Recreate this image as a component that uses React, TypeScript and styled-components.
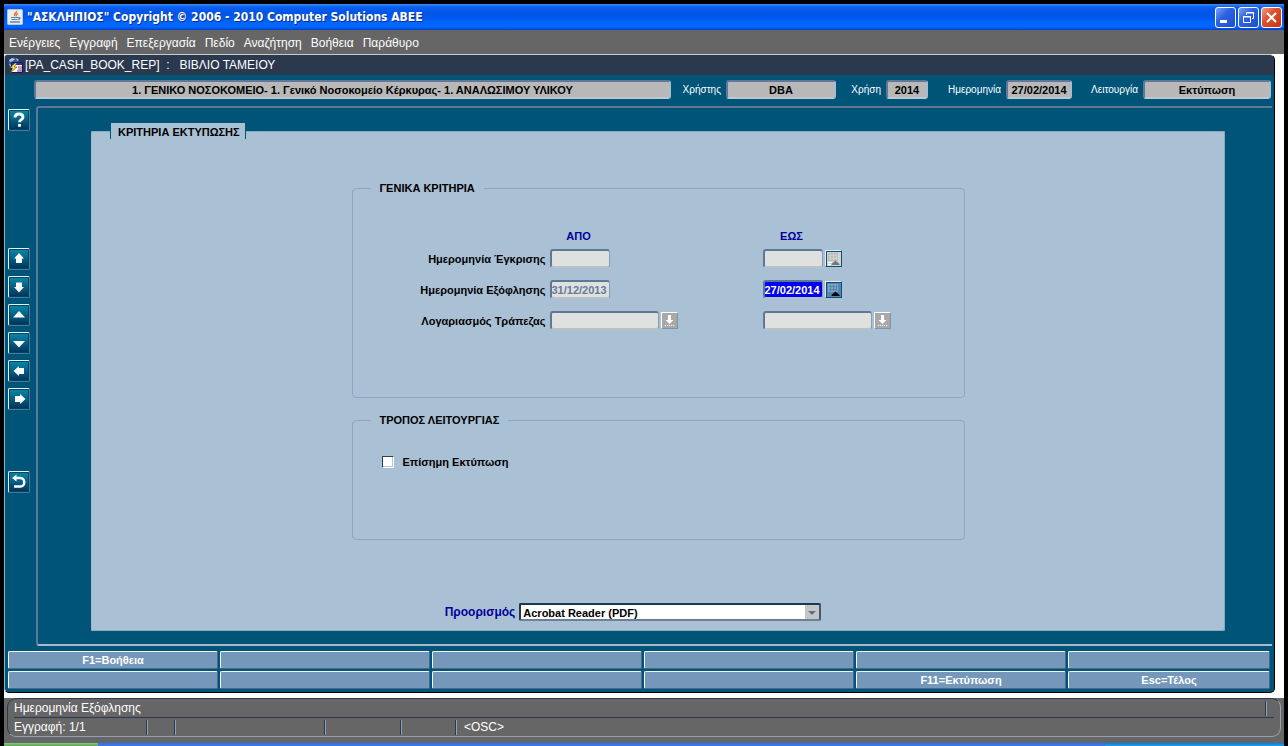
import React from "react";
import styled, { createGlobalStyle } from "styled-components";

const teal = "#005478";
const slate = "#5f7799";
const panelBlue = "#aac0d5";
const edge = "#8ea6c0";

const GlobalStyle = createGlobalStyle`
  * { box-sizing: border-box; }
  body {
    margin: 0;
    background: #000;
    color: #000;
    font-family: "Liberation Sans", Arial, sans-serif;
    font-size: 11px;
    line-height: 14px;
  }
  button, input, select { font: inherit; color: inherit; margin: 0; padding: 0; border-radius: 0; }
`;

const Desktop = styled.div`
  padding: 4px 4px 0;
`;

const TitleBar = styled.header`
  display: flex;
  align-items: center;
  height: 26px;
  padding: 0 2px 0 3px;
  background: linear-gradient(#3d8cf8 0, #0a5ff0 3px, #0055e5 9px, #0058ee 14px, #0066ff 19px, #0066ff 23px, #0040c8 26px);
`;

const WindowTitle = styled.h1`
  flex: 1;
  margin: 0 0 0 4px;
  color: #fff;
  font: bold 12px/18px "DejaVu Sans Condensed", "DejaVu Sans", sans-serif;
  text-shadow: 1px 1px #0b2f8c;
`;

const WindowButtons = styled.div`
  display: flex;
  gap: 2px;
`;

const WindowButton = styled.button<{ $danger?: boolean }>`
  width: 21px;
  height: 21px;
  border: 1px solid #fff;
  border-radius: 3px;
  background: ${(p) =>
    p.$danger
      ? "linear-gradient(135deg, #f0a08a, #e2502c 40%, #c8340e)"
      : "linear-gradient(135deg, #7da2f5, #2f62e0 40%, #1c4fd0)"};
  svg { display: block; }
`;

const MenuBar = styled.nav`
  display: flex;
  gap: 9px;
  height: 24px;
  padding: 6px 5px 0;
  background: #666;
  font-size: 12px;
`;

const MenuItem = styled.a`
  color: #fff;
  text-decoration: none;
`;

const Workspace = styled.main`
  padding: 0 9px 5px 0;
  background: #fff;
`;

const FormWindow = styled.section`
  border: 1px solid;
  border-color: #c4ccd4 #000 #000 #8fb4c8;
  border-radius: 4px 6px 5px 5px;
  background: ${teal};
  overflow: hidden;
`;

const FormTitle = styled.h2`
  display: flex;
  align-items: center;
  gap: 1px;
  height: 20px;
  margin: 0;
  padding-left: 2px;
  background: #2b394e;
  color: #fff;
  font-size: 12px;
  font-weight: normal;
  white-space: pre;
`;

const InfoBar = styled.div`
  display: flex;
  align-items: center;
  padding: 5px 3px 0 29px;
`;

const InfoLabel = styled.label<{ $width: number }>`
  width: ${(p) => p.$width}px;
  padding-right: 5px;
  color: #fff;
  font-size: 10px;
  text-align: right;
`;

const InfoField = styled.input<{ $width?: number }>`
  ${(p) => (p.$width ? `width: ${p.$width}px;` : "flex: 1; min-width: 0;")}
  height: 19px;
  border: 2px solid;
  border-color: ${slate} #a9bccb #b9c8d4 ${slate};
  border-radius: 3px;
  background: #b8b8b8;
  font-weight: bold;
  text-align: center;
  outline: 0;
`;

const Body = styled.div`
  display: flex;
  padding: 7px 2px 0 3px;
`;

const Toolbar = styled.div`
  display: flex;
  flex-direction: column;
  gap: 6px;
  width: 28px;
  padding-top: 3px;
`;

const ToolButton = styled.button<{ $before?: number }>`
  width: 22px;
  height: 22px;
  margin-top: ${(p) => p.$before ?? 0}px;
  border: 1px solid;
  border-color: #e6f2f6 #4a7a9c #4a7a9c #e6f2f6;
  border-radius: 2px;
  background: linear-gradient(#0889a8, #045f84 50%, #022f55);
  box-shadow: inset 0 0 0 1px #004466;
  svg { display: block; }
`;

const Frame = styled.div`
  flex: 1;
  border: solid;
  border-width: 2px 0 2px 2px;
  border-color: ${slate} transparent #a9b8cc ${slate};
  border-radius: 3px 0 0 3px;
  padding: 23px 47px 13px 53px;
`;

const Panel = styled.section`
  position: relative;
  display: flex;
  flex-direction: column;
  align-items: center;
  padding: 50px 20px 10px;
  border-radius: 2px;
  background: ${panelBlue};
  box-shadow: inset 0 1px #88a9c2, inset 1px 0 #9db9cf, inset -1px -1px #88a9c2;
`;

const PanelTab = styled.h3`
  position: absolute;
  top: -8px;
  left: 19px;
  margin: 0;
  padding: 2px 5px 0 7px;
  border: solid ${teal};
  border-width: 0 1px;
  height: 16px;
  background: ${panelBlue};
  font-size: 11px;
  line-height: 15px;
`;

const Group = styled.fieldset<{ $height: number }>`
  width: 613px;
  max-width: 100%;
  min-height: ${(p) => p.$height}px;
  margin: 0 0 15px;
  padding: 0;
  border: 1px solid ${edge};
  border-radius: 4px;
`;

const Legend = styled.legend`
  margin-left: 18px;
  padding: 0 9px;
  font-weight: bold;
  line-height: 15px;
`;

const Criteria = styled.div`
  display: grid;
  grid-template-columns: 193px 209px auto;
  grid-auto-rows: 31px;
  column-gap: 4px;
  align-items: center;
  padding-top: 16px;
  font-weight: bold;
`;

const ColumnHead = styled.span`
  width: 58px;
  padding-top: 16px;
  color: #00009c;
  text-align: center;
`;

const RowLabel = styled.label`
  text-align: right;
  white-space: nowrap;
`;

const FieldCell = styled.div`
  display: flex;
  align-items: center;
  gap: 2px;
`;

const Field = styled.input<{ $wide?: boolean; $selected?: boolean }>`
  width: ${(p) => (p.$wide ? 109 : 60)}px;
  height: 19px;
  border: solid;
  border-width: 2px 1px 2px 2px;
  border-color: ${slate} #8b9cb0 #b9c0c8 ${slate};
  border-radius: 3px;
  background: ${(p) => (p.$selected ? "#0000f0" : "#dfe1df")};
  color: ${(p) => (p.$selected ? "#fff" : "#667a9c")};
  outline: 0;
`;

const PickButton = styled.button<{ $tone: "list" | "dim" | "active" }>`
  width: 17px;
  height: 17px;
  border: 1px solid;
  border-color: ${(p) => (p.$tone === "list" ? "#fff #7c93ad #7c93ad #fff" : "#e4ecf2 #0d4f72 #0d4f72 #e4ecf2")};
  background: ${(p) => ({ list: "#a9a9a9", dim: "#d4d6d6", active: "#5487b0" })[p.$tone]};
  svg { display: block; }
`;

const CheckRow = styled.label`
  display: flex;
  align-items: center;
  gap: 9px;
  margin: 27px 0 0 29px;
  font-weight: bold;
`;

const CheckBox = styled.input`
  appearance: none;
  width: 12px;
  height: 12px;
  border: 1px solid;
  border-color: #2c3f54 #fff #fff #2c3f54;
  background: #fff;
  box-shadow: inset -1px -1px #b4c4d0;
`;

const TargetRow = styled.div`
  display: flex;
  align-items: center;
  gap: 4px;
  margin: 48px 50px 0 0;
  font-weight: bold;
`;

const TargetLabel = styled.label`
  color: #00009c;
  font-size: 12px;
`;

const SelectShell = styled.div`
  display: grid;
  width: 302px;
  svg {
    grid-area: 1 / 1;
    justify-self: end;
    align-self: center;
    margin-right: 2px;
    pointer-events: none;
  }
`;

const Select = styled.select`
  grid-area: 1 / 1;
  appearance: none;
  height: 18px;
  padding: 1px 18px 0 2px;
  border: 2px solid;
  border-color: #1f3650 #44586f #6f8094 #1f3650;
  border-radius: 2px;
  background: #fff;
  line-height: 14px;
`;

const KeyGrid = styled.div`
  display: grid;
  grid-template-columns: repeat(5, 210fr) 202fr;
  gap: 2px;
  padding: 5px 4px 3px 3px;
`;

const KeyButton = styled.button`
  height: 18px;
  border: 1px solid;
  border-color: #f2f8fa #47698c #47698c #f2f8fa;
  border-radius: 2px;
  background: #7598ba;
  color: #fff;
  font-weight: bold;
`;

const StatusBar = styled.footer`
  padding: 0 3px 6px;
  background: #666;
  color: #fff;
  font-size: 12px;
`;

const StatusBox = styled.div`
  border: 1px solid;
  border-color: #2b394e #94a0b4 #94a0b4 #2b394e;
  border-radius: 9px;
  padding: 0 6px;
`;

const StatusRow = styled.div<{ $divided?: boolean }>`
  display: flex;
  align-items: center;
  height: ${(p) => (p.$divided ? 19 : 18)}px;
  ${(p) => (p.$divided ? "border-bottom: 1px solid #2b394e;" : "")}
`;

const StatusCell = styled.span<{ $width?: number; $grow?: boolean; $last?: boolean }>`
  ${(p) => (p.$grow ? "flex: 1;" : p.$width ? `width: ${p.$width}px;` : "")}
  height: 15px;
  line-height: 15px;
  padding-left: ${(p) => (p.$last ? 7 : 0)}px;
  ${(p) => (p.$last ? "" : "border-right: 1px solid #94a0b4; box-shadow: inset -1px 0 #2b394e;")}
`;

const TaskBar = styled.div`
  display: grid;
  grid-template-columns: 94px 1fr 179px;
  height: 4px;
`;

const TaskStrip = styled.div<{ $from: string; $to: string }>`
  background: linear-gradient(${(p) => p.$from}, ${(p) => p.$to});
`;

const CupIcon = () => (
  <svg width="16" height="16" viewBox="0 0 16 16" aria-hidden="true">
    <rect x="0.5" y="0.5" width="15" height="15" rx="1" fill="#e9edf0" stroke="#b8c6d4" />
    <path d="M9.500 2c1 1.500-3.500 2.500-2 5M11 4.500c-1.500 1-2.500 1.500-1.500 3" fill="none" stroke="#e07820" strokeWidth="1.500" />
    <path d="M4 8.500h7M4.500 10.500h6M11 8.500h1.500c1 0 .5 2-1.500 2" fill="none" stroke="#5a80a4" strokeWidth="1.200" />
    <path d="M3 13h10" stroke="#5a80a4" strokeWidth="1.400" />
  </svg>
);

const FormIcon = () => (
  <svg width="17" height="17" viewBox="0 0 17 17" aria-hidden="true">
    <circle cx="7" cy="6" r="5.500" fill="#2f5c96" />
    <path d="M2 3l3-2 3 1-2 2-3 1zM2 7l3 1-1 2zM9 1l3 2-2 1z" fill="#a9c8dc" />
    <path d="M4.500 5.500h11v10h-11z" fill="#fff" stroke="#1a1468" />
    <path d="M5 6h10v2H5z" fill="#3030a8" />
    <path d="M11 10h4M11 12h4" stroke="#c02838" />
    <path d="M10 14h5" stroke="#3030a8" />
    <path d="M8 6l-5 5h3l-3 5 7-6H7l3-4z" fill="#ffe94a" stroke="#504800" strokeWidth="0.600" />
  </svg>
);

const glyphs = {
  help: <path d="M6 7.500c0-2.500 1.500-3.500 4-3.500s4 1 4 3.200c0 2.600-3.500 2.300-3.500 5M10.500 14v2.800" fill="none" stroke="#fff" strokeWidth="2.800" />,
  up: <path d="M10 4l5 5.500h-2V14H7V9.500H5z" fill="#fff" />,
  down: <path d="M10 15.500L15 10h-2V5.500H7V10H5z" fill="#fff" />,
  first: <path d="M10 6l6 6.500H4z" fill="#fff" />,
  last: <path d="M10 14.500L16 8H4z" fill="#fff" />,
  left: <path d="M4.500 10L10 5v2h5v6h-5v2z" fill="#fff" />,
  right: <path d="M16.500 10L11 5v2H6v6h5v2z" fill="#fff" />,
  back: (
    <g>
      <path d="M6 6h5.500c5 0 5 8.500 0 8.500H5" fill="none" stroke="#fff" strokeWidth="2.400" />
      <path d="M3 6l4.500-3.500v7z" fill="#fff" />
    </g>
  ),
};

type Tool = { id: keyof typeof glyphs; label: string; before?: number };

const tools: Tool[] = [
  { id: "help", label: "Βοήθεια" },
  { id: "up", label: "Προηγούμενη εγγραφή", before: 111 },
  { id: "down", label: "Επόμενη εγγραφή" },
  { id: "first", label: "Προηγούμενη σελίδα" },
  { id: "last", label: "Επόμενη σελίδα" },
  { id: "left", label: "Προηγούμενο πεδίο" },
  { id: "right", label: "Επόμενο πεδίο" },
  { id: "back", label: "Επιστροφή", before: 55 },
];

const ListPick = () => (
  <PickButton $tone="list" type="button" aria-label="Λίστα τιμών">
    <svg width="15" height="15" viewBox="0 0 15 15">
      <path d="M6 2h3v5h2.500L7.500 11 3.500 7H6z" fill="#fff" />
      <path d="M3 12.500h9" stroke="#fff" strokeDasharray="1 1" />
    </svg>
  </PickButton>
);

const DatePick = ({ active }: { active?: boolean }) => (
  <PickButton $tone={active ? "active" : "dim"} type="button" aria-label="Ημερολόγιο">
    <svg width="15" height="15" viewBox="0 0 15 15">
      <path d="M.5 15V.5H15" fill="none" stroke="#0d4f72" />
      <path d="M2 2h10v8H2z" fill={active ? "#7da4c6" : "#bcbebe"} />
      <path d="M3 4.500h8M3 7.500h8M4.500 3v6M7.500 3v6M10.500 3v6" stroke={active ? "#5585b0" : "#cfd1d1"} />
      <path d="M5.500 14v-1l4-3.500 4 3.500v1z" fill={active ? "#000" : "#777"} />
      {!active && <path d="M2 11.500h4M2 13.500h3" stroke="#fff" />}
    </svg>
  </PickButton>
);

const menus = ["Ενέργειες", "Εγγραφή", "Επεξεργασία", "Πεδίο", "Αναζήτηση", "Βοήθεια", "Παράθυρο"];

const info = [
  { id: "user", label: "Χρήστης", value: "DBA", labelWidth: 55, width: 110 },
  { id: "year", label: "Χρήση", value: "2014", labelWidth: 50, width: 42 },
  { id: "date", label: "Ημερομηνία", value: "27/02/2014", labelWidth: 78, width: 66 },
  { id: "mode", label: "Λειτουργία", value: "Εκτύπωση", labelWidth: 71, width: 128 },
];

const keys = ["F1=Βοήθεια", "", "", "", "", "", "", "", "", "", "F11=Εκτύπωση", "Esc=Τέλος"];

export default function App() {
  return (
    <>
      <GlobalStyle />
      <Desktop>
        <TitleBar>
          <CupIcon />
          <WindowTitle>"ΑΣΚΛΗΠΙΟΣ" Copyright © 2006 - 2010 Computer Solutions ΑΒΕΕ</WindowTitle>
          <WindowButtons>
            <WindowButton type="button" aria-label="Ελαχιστοποίηση">
              <svg width="19" height="19"><path d="M4 12h7v3H4z" fill="#fff" /></svg>
            </WindowButton>
            <WindowButton type="button" aria-label="Επαναφορά">
              <svg width="19" height="19" fill="none" stroke="#fff">
                <path d="M4.500 8.500h7v6h-7zM4 9h8M7.500 7V4.500h7v6H13M7 5h8" />
              </svg>
            </WindowButton>
            <WindowButton type="button" $danger aria-label="Κλείσιμο">
              <svg width="19" height="19"><path d="M5 5l9 9M14 5l-9 9" stroke="#fff" strokeWidth="2.200" /></svg>
            </WindowButton>
          </WindowButtons>
        </TitleBar>

        <MenuBar>
          {menus.map((m) => (
            <MenuItem key={m} href="#">{m}</MenuItem>
          ))}
        </MenuBar>

        <Workspace>
          <FormWindow>
            <FormTitle>
              <FormIcon />
              {"[PA_CASH_BOOK_REP]  :   ΒΙΒΛΙΟ ΤΑΜΕΙΟΥ"}
            </FormTitle>

            <InfoBar>
              <InfoField
                readOnly
                aria-label="Νοσοκομείο"
                value="1. ΓΕΝΙΚΟ ΝΟΣΟΚΟΜΕΙΟ- 1. Γενικό Νοσοκομείο Κέρκυρας- 1. ΑΝΑΛΩΣΙΜΟΥ ΥΛΙΚΟΥ"
              />
              {info.map((f) => (
                <React.Fragment key={f.id}>
                  <InfoLabel htmlFor={f.id} $width={f.labelWidth}>{f.label}</InfoLabel>
                  <InfoField id={f.id} readOnly $width={f.width} value={f.value} />
                </React.Fragment>
              ))}
            </InfoBar>

            <Body>
              <Toolbar role="toolbar">
                {tools.map((t) => (
                  <ToolButton key={t.id} type="button" aria-label={t.label} $before={t.before}>
                    <svg width="20" height="20" viewBox="0 0 20 20">{glyphs[t.id]}</svg>
                  </ToolButton>
                ))}
              </Toolbar>

              <Frame>
                <Panel>
                  <PanelTab>ΚΡΙΤΗΡΙΑ ΕΚΤΥΠΩΣΗΣ</PanelTab>

                  <Group $height={217}>
                    <Legend>ΓΕΝΙΚΑ ΚΡΙΤΗΡΙΑ</Legend>
                    <Criteria>
                      <span />
                      <ColumnHead>ΑΠΟ</ColumnHead>
                      <ColumnHead>ΕΩΣ</ColumnHead>

                      <RowLabel htmlFor="approved">Ημερομηνία Έγκρισης</RowLabel>
                      <FieldCell><Field id="approved" /></FieldCell>
                      <FieldCell>
                        <Field aria-label="Ημερομηνία Έγκρισης έως" />
                        <DatePick />
                      </FieldCell>

                      <RowLabel htmlFor="paid">Ημερομηνία Εξόφλησης</RowLabel>
                      <FieldCell><Field id="paid" defaultValue="31/12/2013" /></FieldCell>
                      <FieldCell>
                        <Field $selected aria-label="Ημερομηνία Εξόφλησης έως" defaultValue="27/02/2014" />
                        <DatePick active />
                      </FieldCell>

                      <RowLabel htmlFor="account">Λογαριασμός Τράπεζας</RowLabel>
                      <FieldCell><Field id="account" $wide /><ListPick /></FieldCell>
                      <FieldCell>
                        <Field $wide aria-label="Λογαριασμός Τράπεζας έως" />
                        <ListPick />
                      </FieldCell>
                    </Criteria>
                  </Group>

                  <Group $height={127}>
                    <Legend>ΤΡΟΠΟΣ ΛΕΙΤΟΥΡΓΙΑΣ</Legend>
                    <CheckRow>
                      <CheckBox type="checkbox" />
                      Επίσημη Εκτύπωση
                    </CheckRow>
                  </Group>

                  <TargetRow>
                    <TargetLabel htmlFor="target">Προορισμός</TargetLabel>
                    <SelectShell>
                      <Select id="target" defaultValue="pdf">
                        <option value="pdf">Acrobat Reader (PDF)</option>
                      </Select>
                      <svg width="14" height="14" aria-hidden="true">
                        <path d="M0 0h14v14H0z" fill="#c4c6c8" />
                        <path d="M3 6h8l-4 4z" fill="#5c6f8c" />
                      </svg>
                    </SelectShell>
                  </TargetRow>
                </Panel>
              </Frame>
            </Body>

            <KeyGrid>
              {keys.map((k, i) => (
                <KeyButton key={i} type="button">{k}</KeyButton>
              ))}
            </KeyGrid>
          </FormWindow>
        </Workspace>

        <StatusBar>
          <StatusBox>
            <StatusRow $divided>
              <StatusCell $grow>Ημερομηνία Εξόφλησης</StatusCell>
              <StatusCell $last />
            </StatusRow>
            <StatusRow>
              <StatusCell $width={134}>Εγγραφή: 1/1</StatusCell>
              <StatusCell $width={28} />
              <StatusCell $width={150} />
              <StatusCell $width={76} />
              <StatusCell $width={55} />
              <StatusCell $last>&lt;OSC&gt;</StatusCell>
            </StatusRow>
          </StatusBox>
        </StatusBar>

        <TaskBar>
          <TaskStrip $from="#8cc884" $to="#3f9a3c" />
          <TaskStrip $from="#2f6fe0" $to="#3d84f2" />
          <TaskStrip $from="#1478d8" $to="#18b0f4" />
        </TaskBar>
      </Desktop>
    </>
  );
}
